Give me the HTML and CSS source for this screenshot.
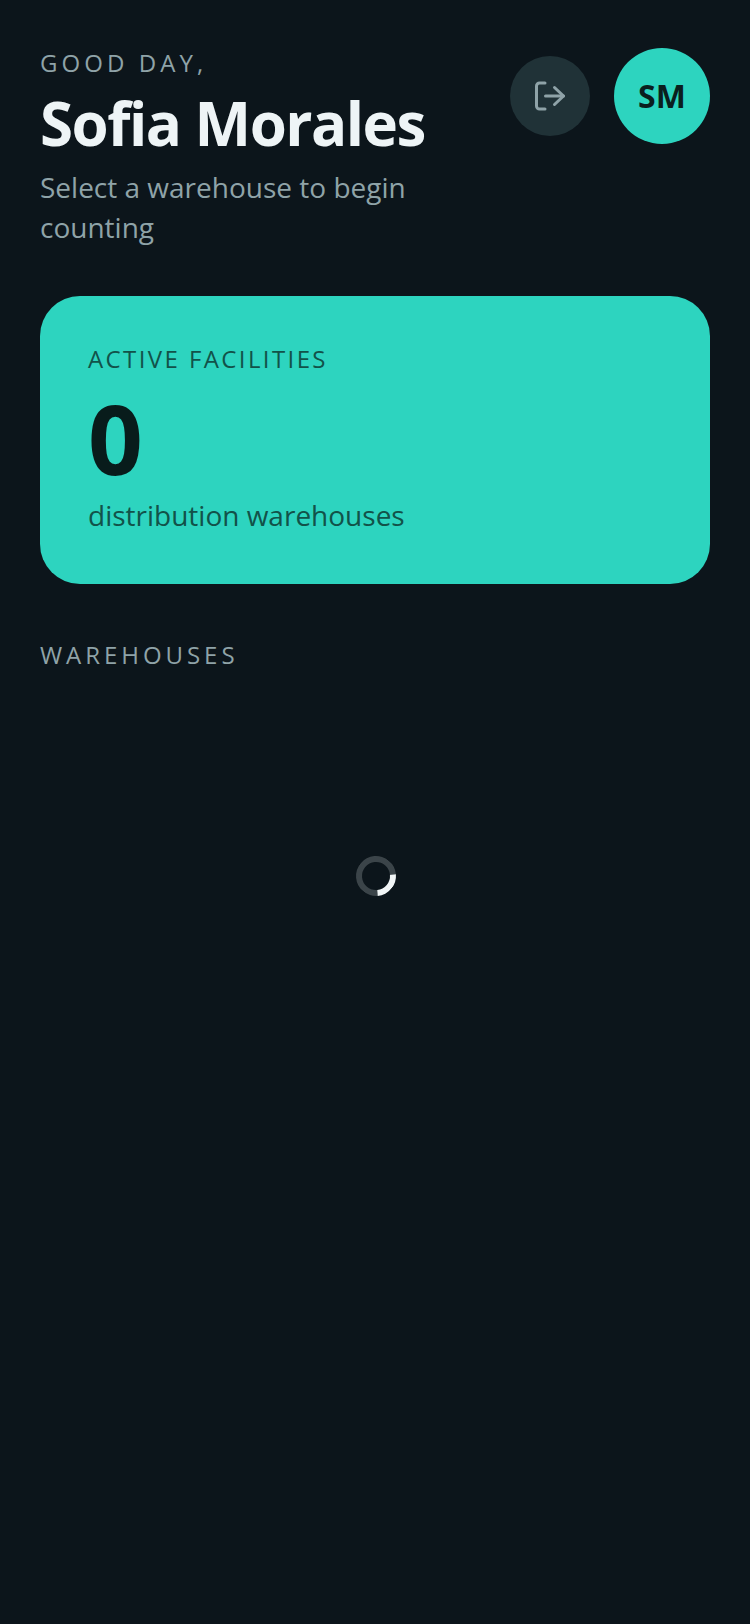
FILE: index.html
```html
<!DOCTYPE html>
<html lang="en">
<head>
<meta charset="utf-8">
<title>Warehouses</title>
<link rel="stylesheet" href="styles.css">
</head>
<body>
<main class="screen">
  <header class="header">
    <div class="intro">
      <p class="greeting">GOOD DAY,</p>
      <h1 class="name">Sofia Morales</h1>
      <p class="hint">Select a warehouse to begin counting</p>
    </div>
    <div class="actions">
      <button class="logout" aria-label="Log out">
        <svg class="logout-icon" viewBox="0 0 32 32" fill="none" stroke="currentColor" stroke-width="3" stroke-linecap="round" stroke-linejoin="round">
          <path d="M11 3H5.500A3 3 0 0 0 2.500 6v20a3 3 0 0 0 3 3H11"/>
          <path d="M11.500 16h18"/>
          <path d="M20.500 7.500L29.500 16l-9 8.500"/>
        </svg>
      </button>
      <div class="avatar">SM</div>
    </div>
  </header>
  <section class="card">
    <p class="card-label">ACTIVE FACILITIES</p>
    <p class="card-count">0</p>
    <p class="card-sub">distribution warehouses</p>
  </section>
  <h2 class="section-title">WAREHOUSES</h2>
  <div class="loader"><div class="spinner"></div></div>
</main>
</body>
</html>
```
FILE: styles.css
```css
* { box-sizing: border-box; }
html, body { margin: 0; height: 100%; }
body { background: #0c151b; font-family: "Open Sans", sans-serif; }
.screen { padding: 47px 40px 0; min-height: 1624px; }
p, h1, h2 { margin: 0; }
.header { display: flex; justify-content: space-between; align-items: flex-start; }
.intro { width: 420px; }
.greeting { font-size: 24px; line-height: 32px; letter-spacing: 4.08px; color: #8fa3a8; }
.name { font-size: 60px; line-height: 72px; font-weight: 700; letter-spacing: -1.5px; color: #eef4f6; margin-top: 8px; }
.hint { font-size: 28px; line-height: 40px; color: #8fa3a8; margin-top: 8px; }
.actions { display: flex; align-items: center; gap: 24px; margin-top: 1px; }
.logout { width: 80px; height: 80px; border: 0; padding: 0; border-radius: 50%; background: #203237; color: #8fa3a8; display: flex; align-items: center; justify-content: center; }
.logout-icon { width: 32px; height: 32px; }
.avatar { width: 96px; height: 96px; border-radius: 50%; background: #2dd4bf; color: #0a1f1e; font-size: 32px; font-weight: 700; display: flex; align-items: center; justify-content: center; padding-bottom: 2px; }
.card { margin-top: 49px; height: 288px; border-radius: 40px; background: #2dd4bf; padding: 47px 48px; }
.card-label { font-size: 24px; line-height: 32px; letter-spacing: 2.4px; color: #125249; }
.card-count { font-size: 96px; line-height: 96px; font-weight: 700; margin-top: 15px; color: #081c1b; }
.card-sub { font-size: 28px; line-height: 40px; margin-top: 9px; color: #125249; }
.section-title { margin-top: 55px; font-size: 24px; line-height: 32px; font-weight: 400; letter-spacing: 3.95px; color: #8fa3a8; }
.loader { display: flex; justify-content: center; margin-top: 185px; padding-left: 1px; }
.spinner { width: 40px; height: 40px; border-radius: 50%; border: 6px solid #3b4449; border-right-color: #f1f5f6; transform: rotate(40deg); }
```
